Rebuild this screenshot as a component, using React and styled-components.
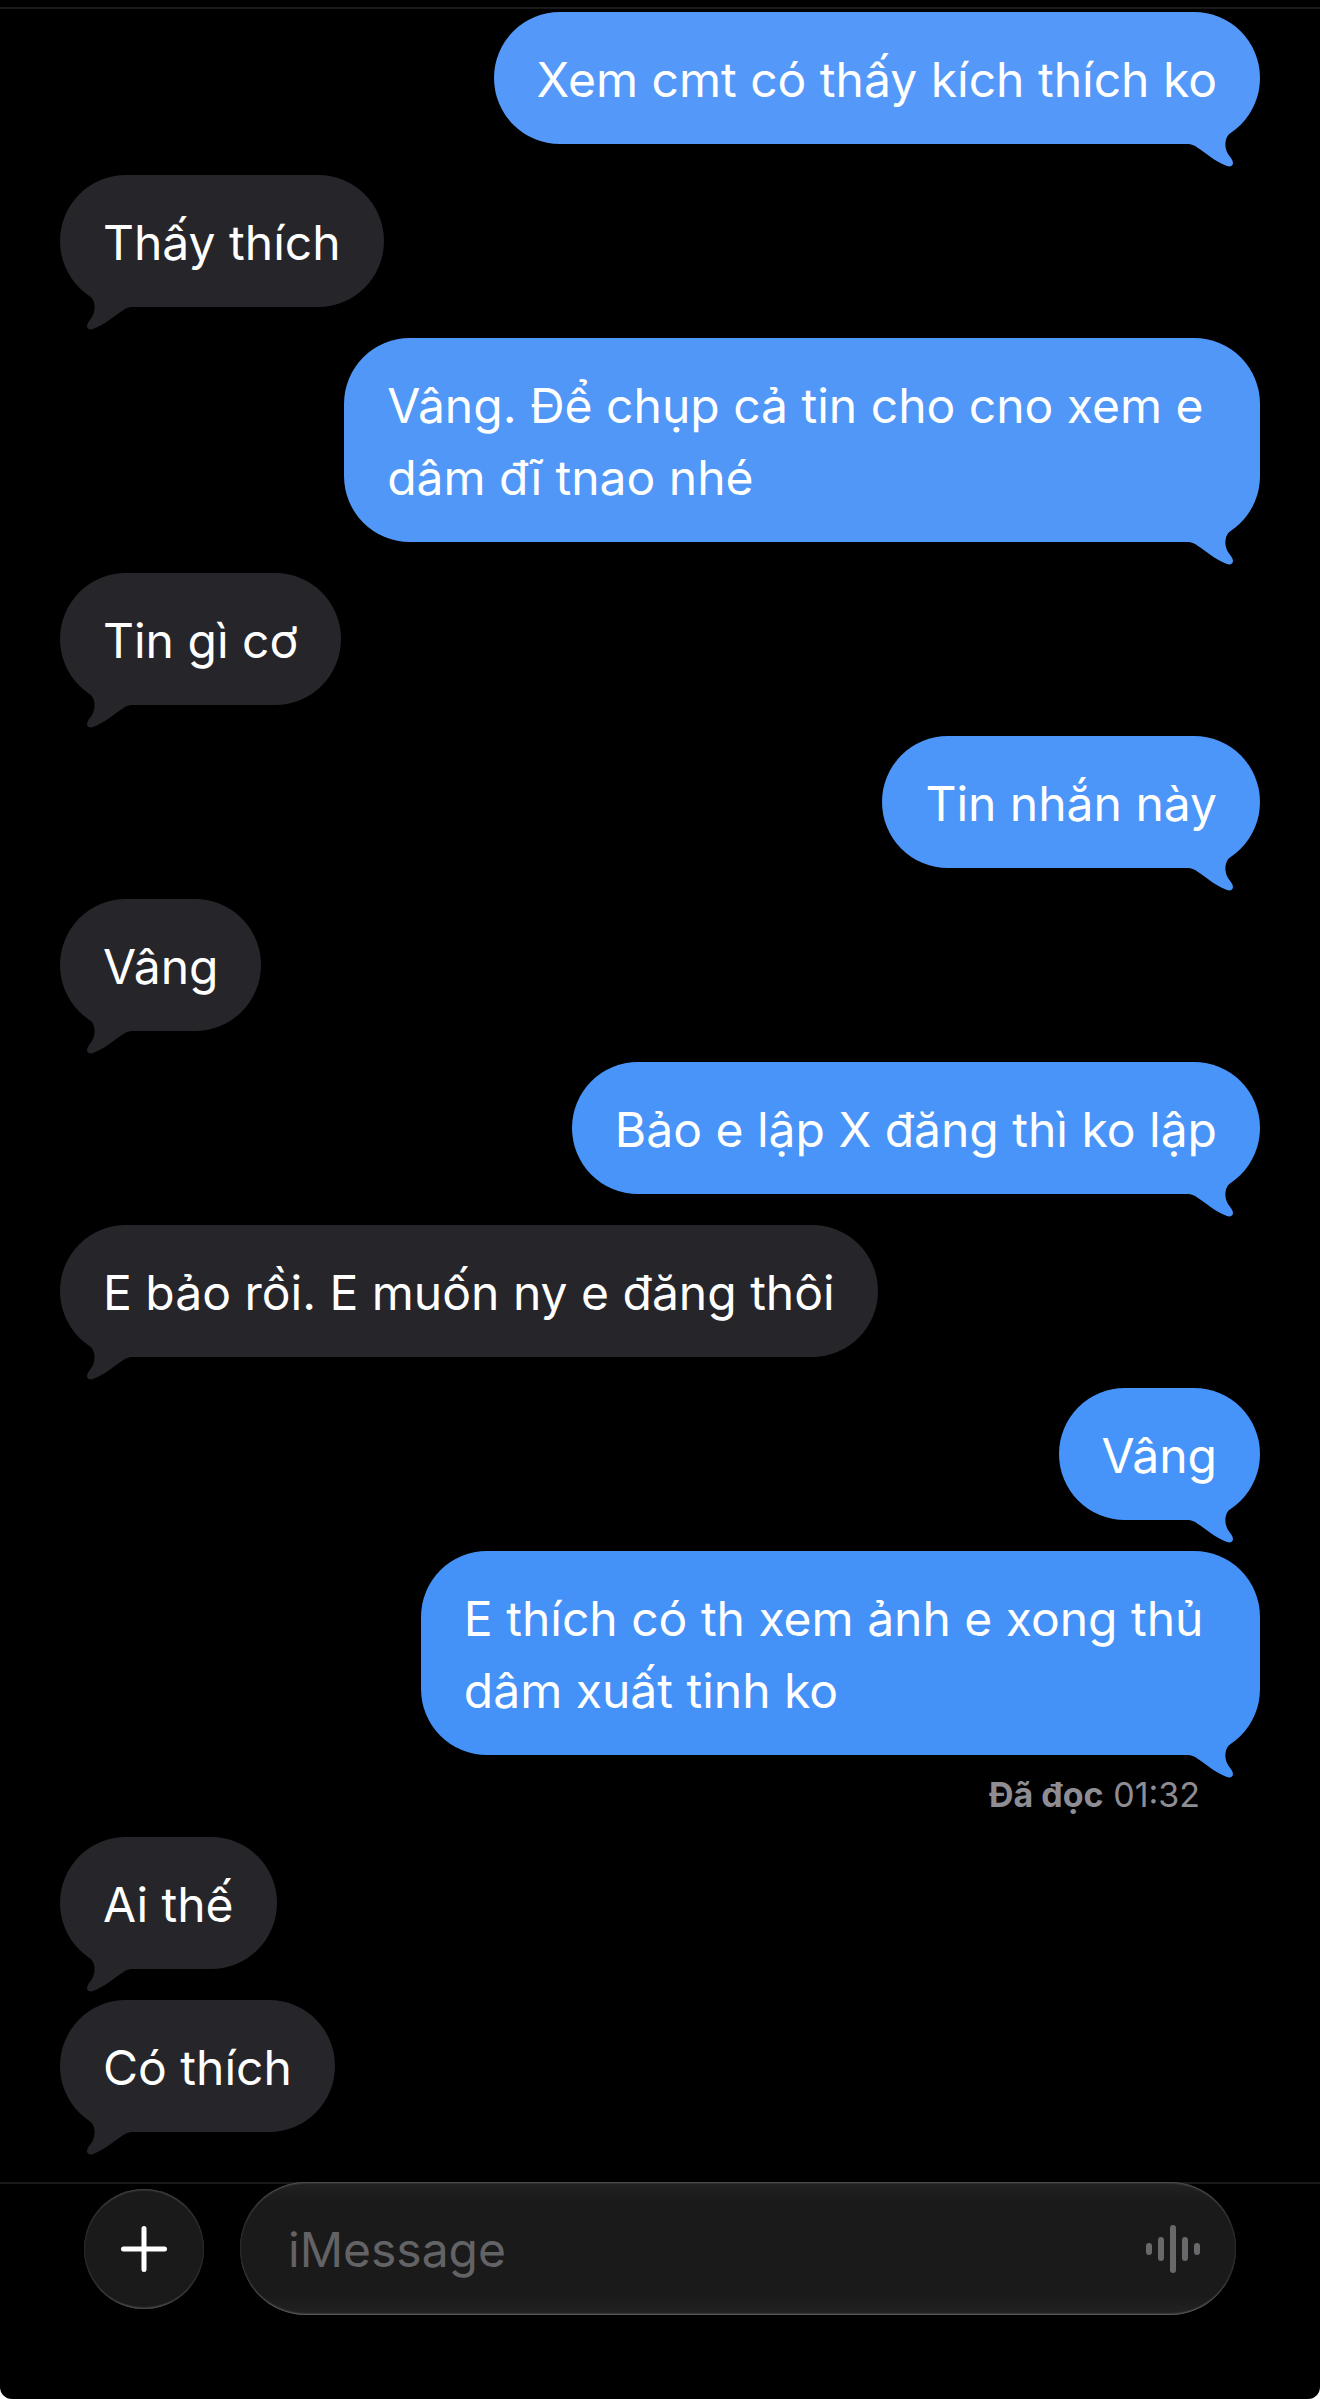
import React, { useState } from 'react'
import styled, { createGlobalStyle } from 'styled-components'

const GlobalStyle = createGlobalStyle`
    * {
        box-sizing: border-box;
    }
    body {
        margin: 0;
        background: #ffffff;
        font-family: "Inter", "Liberation Sans", sans-serif;
        -webkit-font-smoothing: antialiased;
    }
`

const Page = styled.div`
    display: flex;
    flex-direction: column;
    min-height: 100vh;
    padding-top: 7px;
    background: #000000;
    border-radius: 0 0 12px 12px;
    overflow: hidden;
`

const Thread = styled.main`
    flex: 1;
    display: flex;
    flex-direction: column;
    padding: 3px 60px 19px;
    border-top: 2px solid #1a1a1a;
`

const Bubble = styled.div`
    position: relative;
    align-self: ${(props) => (props.$mine ? 'flex-end' : 'flex-start')};
    margin-bottom: 31px;
    padding: 32px 43px 28px;
    border-radius: 66px;
    background: ${(props) => props.$color};
    color: #ffffff;
    font-size: 48px;
    line-height: 72px;
    white-space: pre;
`

const TailSvg = styled.svg`
    position: absolute;
    bottom: -24px;
    ${(props) => (props.$mine ? 'right: 0; transform: scaleX(-1);' : 'left: 0;')}
    width: 90px;
    height: 54px;
    fill: ${(props) => props.$color};
`

const Receipt = styled.div`
    align-self: flex-end;
    margin-top: -31px;
    padding: 20px 60px 22px;
    color: #8e8d93;
    font-size: 34px;
    line-height: 40px;
`

const Composer = styled.form`
    display: flex;
    align-items: center;
    gap: 36px;
    padding: 0 84px 84px;
    background: linear-gradient(#1a1a1a, #1a1a1a) top / 100% 2px no-repeat;
`

const PlusButton = styled.button`
    display: flex;
    align-items: center;
    justify-content: center;
    flex: none;
    width: 120px;
    height: 120px;
    padding: 0;
    border: 0;
    border-radius: 50%;
    background: #1a1a1a;
    box-shadow: inset 0 2px 2px -1px #4a4a4a, inset 0 -2px 2px -1px #565656, inset 0 0 2px 1px #252525;
`

const Field = styled.div`
    flex: 1;
    display: flex;
    align-items: center;
    height: 133px;
    padding: 0 36px 0 48px;
    border-radius: 66px;
    background: linear-gradient(#222222, #1a1a1a 20px, #1a1a1a 113px, #222222);
    box-shadow: inset 0 2px 2px -1px #5a5a5a, inset 0 -2px 2px -1px #6a6a6a, inset 0 0 2px 1px #272727;
`

const TextInput = styled.input`
    flex: 1;
    min-width: 0;
    padding: 2px 0 0;
    border: 0;
    outline: 0;
    background: transparent;
    color: #ffffff;
    font-family: inherit;
    font-size: 48px;
    line-height: 72px;

    &::placeholder {
        color: #636366;
        opacity: 1;
    }
`

const DictateButton = styled.button`
    display: flex;
    padding: 0;
    border: 0;
    background: transparent;
`

const thread = [
    { id: 1, mine: true, color: '#5499f9', text: 'Xem cmt có thấy kích thích ko' },
    { id: 2, text: 'Thấy thích' },
    { id: 3, mine: true, color: '#5097f8', text: 'Vâng. Để chụp cả tin cho cno xem e \ndâm đĩ tnao nhé' },
    { id: 4, text: 'Tin gì cơ' },
    { id: 5, mine: true, color: '#4c95f9', text: 'Tin nhắn này' },
    { id: 6, text: 'Vâng' },
    { id: 7, mine: true, color: '#4994f9', text: 'Bảo e lập X đăng thì ko lập' },
    { id: 8, text: 'E bảo rồi. E muốn ny e đăng thôi' },
    { id: 9, mine: true, color: '#4693f9', text: 'Vâng' },
    { id: 10, mine: true, color: '#4491f8', text: 'E thích có th xem ảnh e xong thủ \ndâm xuất tinh ko', read: '01:32' },
    { id: 11, text: 'Ai thế' },
    { id: 12, text: 'Có thích' },
]

const Tail = ({ mine, color }) => (
    <TailSvg $mine={mine} $color={color} viewBox="0 -30 90 54" aria-hidden="true">
        <path d="M18 -22C21 -18 25 -15 28 -13C36 -7 36 3 32 10C30 13 27 16 27 19C27 22 30 23 33 22C46 17 54 9 62 4C66 1 69 0 72 0L80 0L80 -12Z" />
    </TailSvg>
)

const Message = ({ message }) => {
    const color = message.color || '#26252a'
    return (
        <>
            <Bubble $mine={message.mine} $color={color}>
                {message.text}
                <Tail mine={message.mine} color={color} />
            </Bubble>
            {message.read && (
                <Receipt>
                    <b>Đã đọc</b> {message.read}
                </Receipt>
            )}
        </>
    )
}

const App = () => {
    const [draft, setDraft] = useState('')

    return (
        <>
            <GlobalStyle />
            <Page>
                <Thread>
                    {thread.map((message) => (
                        <Message key={message.id} message={message} />
                    ))}
                </Thread>
                <Composer onSubmit={(e) => e.preventDefault()}>
                    <PlusButton type="button" aria-label="Thêm">
                        <svg width="46" height="46" viewBox="0 0 46 46" stroke="#ffffff" strokeWidth="5" strokeLinecap="round">
                            <path d="M23 2.5V43.5M2.5 23H43.5" />
                        </svg>
                    </PlusButton>
                    <Field>
                        <TextInput
                            aria-label="iMessage"
                            placeholder="iMessage"
                            value={draft}
                            onChange={(e) => setDraft(e.target.value)}
                        />
                        <DictateButton type="button" aria-label="Ghi âm">
                            <svg width="54" height="48" viewBox="0 0 54 48" fill="#69696c">
                                <rect x="0" y="18" width="6" height="12" rx="3" />
                                <rect x="12" y="12" width="6" height="24" rx="3" />
                                <rect x="24" y="0" width="6" height="48" rx="3" />
                                <rect x="36" y="12" width="6" height="24" rx="3" />
                                <rect x="48" y="18" width="6" height="12" rx="3" />
                            </svg>
                        </DictateButton>
                    </Field>
                </Composer>
            </Page>
        </>
    )
}

export default App
